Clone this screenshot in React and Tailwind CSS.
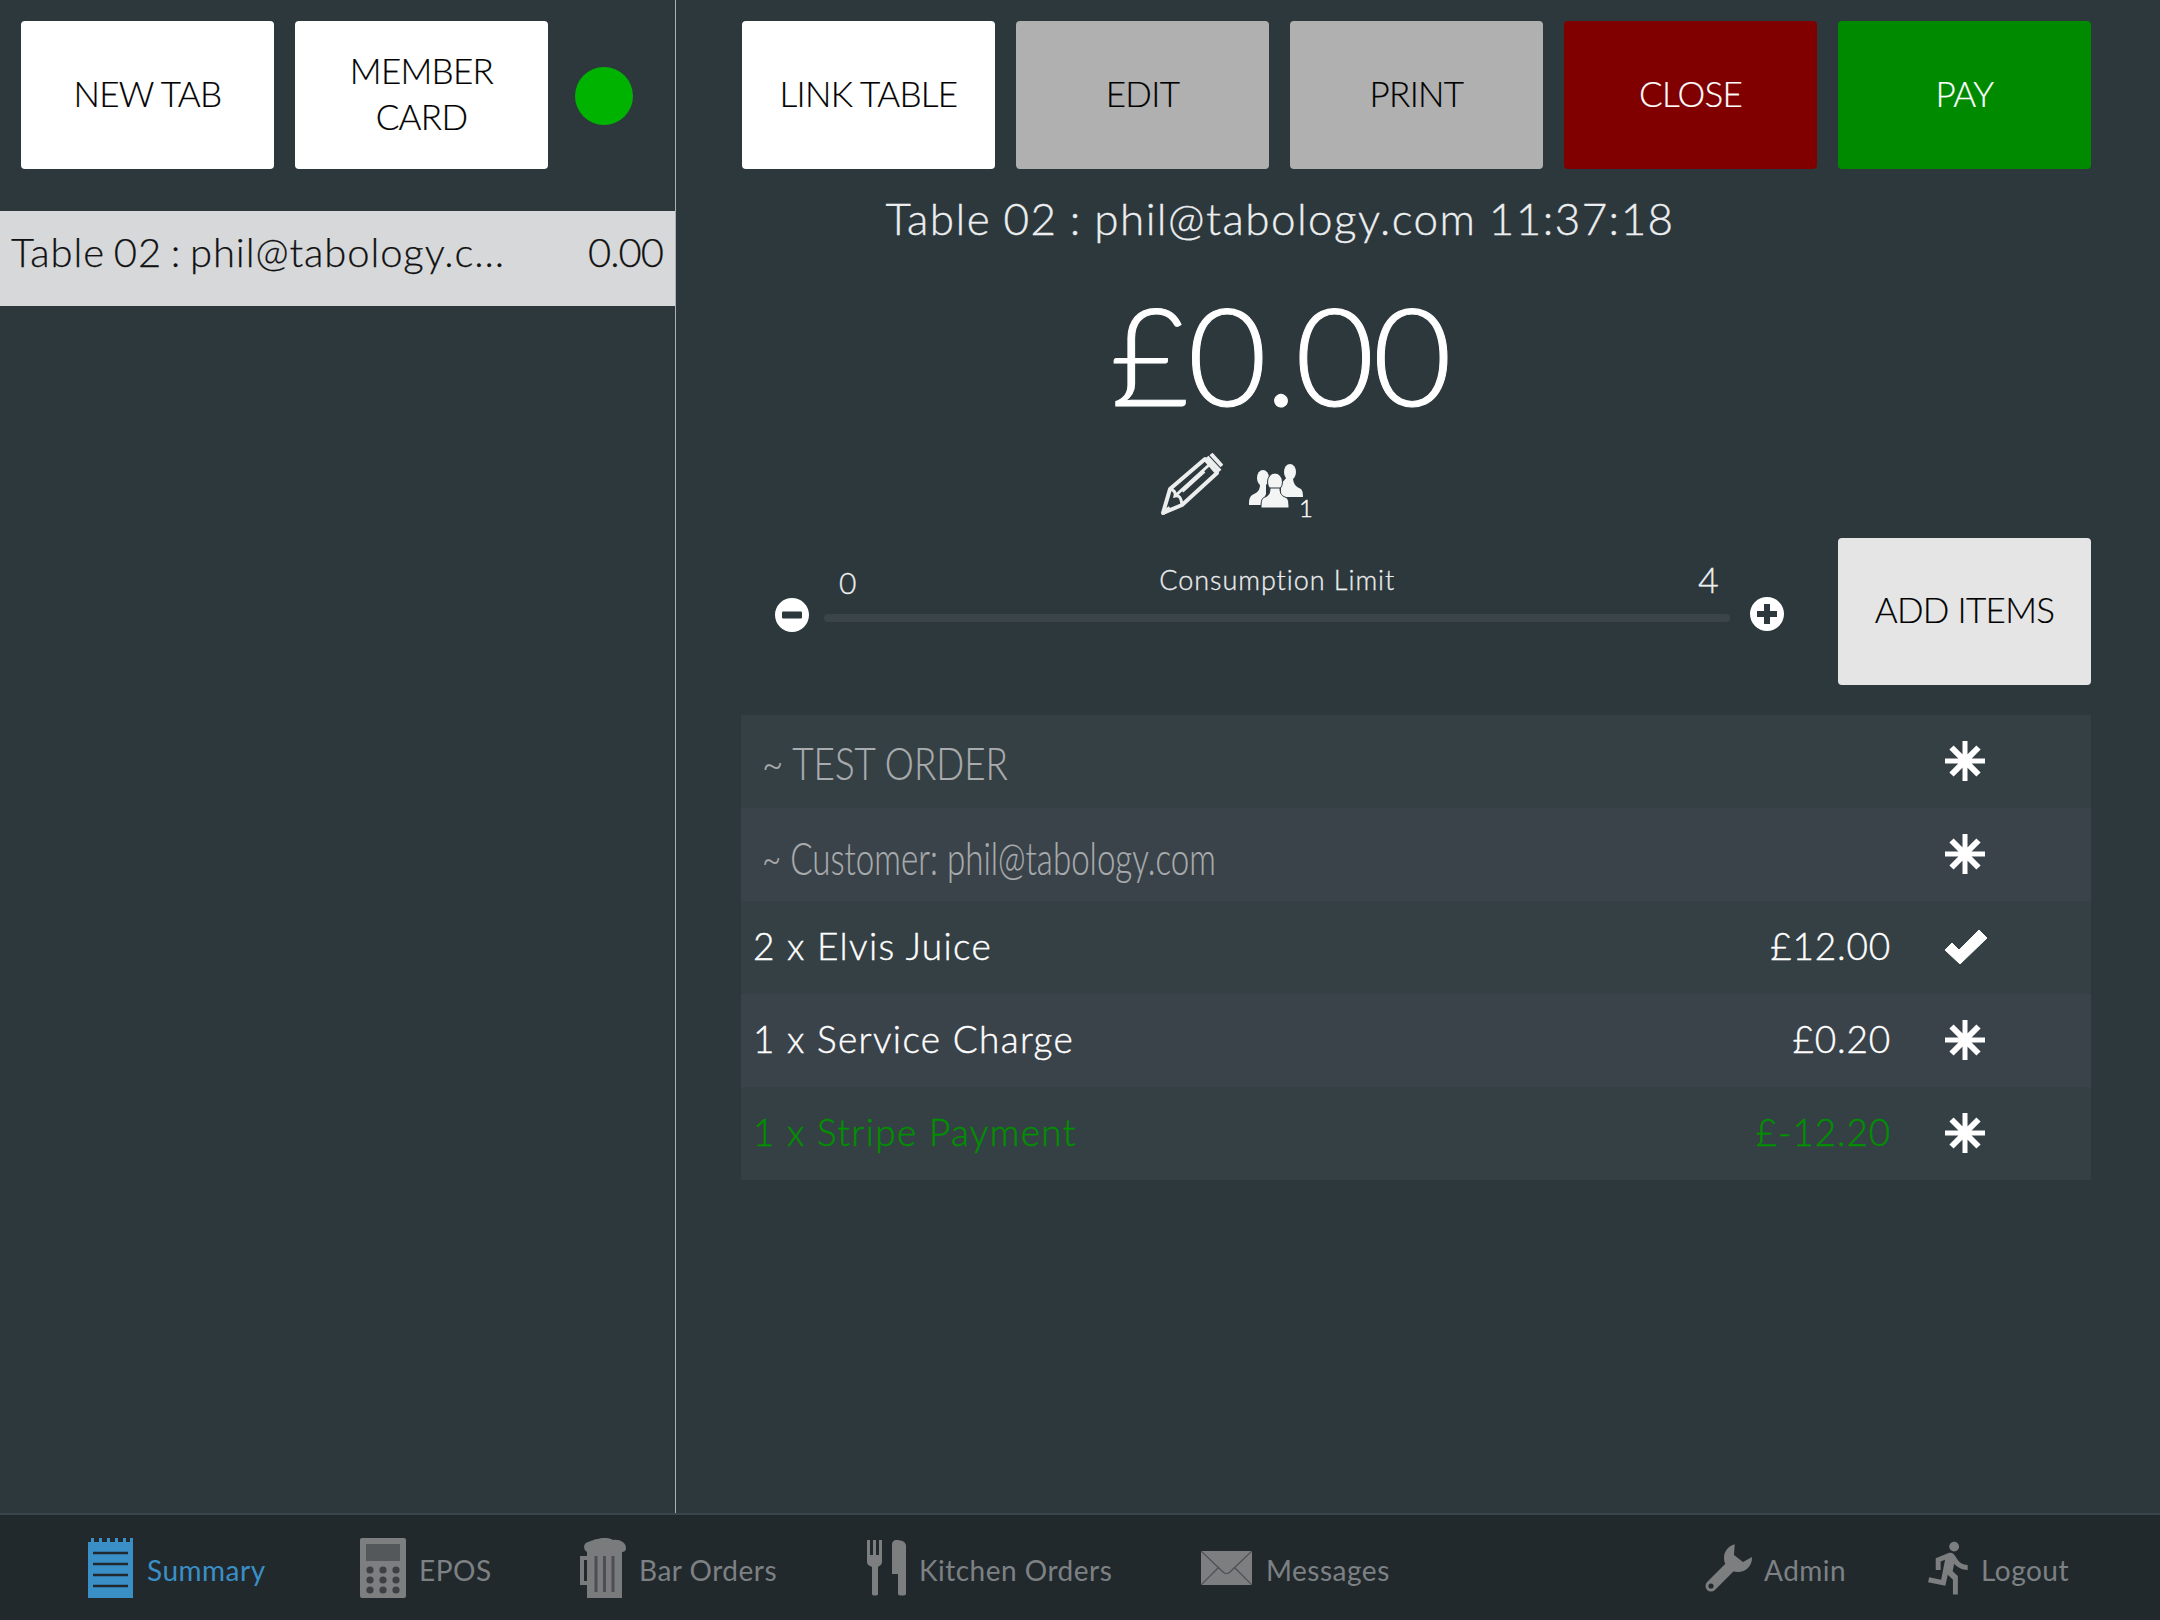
import React from "react";

function Btn({ className, children }) {
  return (
    <div className={`w-[253px] h-[148px] shrink-0 rounded-[4px] flex items-center justify-center text-center text-[35px] leading-[46px] tracking-[-0.7px] pb-[4px] [-webkit-text-stroke:0.2px] ${className}`}>
      {children}
    </div>
  );
}

function Asterisk() {
  return (
    <svg viewBox="0 0 40 40" className="w-[40px] h-[40px]" stroke="#fff" fill="none">
      <path d="M20 0V40M0 20H40" strokeWidth="5" />
      <path d="M6.5 6.5L33.5 33.5M33.5 6.5L6.5 33.5" strokeWidth="6" />
      <circle cx="20" cy="20" r="7" fill="#fff" stroke="none" />
    </svg>
  );
}

function Check() {
  return (
    <svg viewBox="0 0 42 34" className="w-[42px] h-[34px]">
      <path d="M0 20L7 13L14 20L34 0L42 8L15 34Z" fill="#fff" stroke="#fff" strokeWidth="1" strokeLinejoin="round" />
    </svg>
  );
}

function Row({ text, price, note, green, alt, check, noteClass }) {
  const color = green ? "text-[#009000]" : note ? "text-[#a9acae]" : "text-white";
  return (
    <div className={`h-[93px] flex items-center ${alt ? "bg-[#3b434a]" : "bg-[#354045]"}`}>
      <div className={`flex-1 ${color} ${note ? "pl-[21px]" : "pl-[12px] pb-[3px] text-[37px] tracking-[1.3px] [-webkit-text-stroke:0.4px]"}`}>
        {note ? (
          <span className={`inline-block origin-left whitespace-nowrap text-[46px] leading-[56px] font-light [-webkit-text-stroke:0.2px] ${noteClass}`}>{text}</span>
        ) : (
          text
        )}
      </div>
      <div className={`text-[37px] tracking-[0.8px] [-webkit-text-stroke:0.4px] text-right w-[240px] pb-[3px] ${color}`}>{price}</div>
      <div className="w-[200px] pl-[54px] pb-[2px] flex">
        {check ? <Check /> : <Asterisk />}
      </div>
    </div>
  );
}

function NavItem({ icon, label, className, active }) {
  return (
    <div className={`flex items-center shrink-0 ${className}`}>
      {icon}
      <span className={`pt-[5px] text-[28px] tracking-[0.5px] font-normal ${active ? "text-[#3a8fc7]" : "text-[#7d8184]"}`}>{label}</span>
    </div>
  );
}

export default function App() {
  return (
    <div className="w-[2160px] h-[1620px] flex flex-col bg-[#2d383d] overflow-hidden font-['Lato',sans-serif] font-light text-black">
      <div className="h-[1513px] flex">
        {/* left column */}
        <div className="w-[676px] shrink-0 border-r-[1px] border-[#aab0b3] pt-[21px]">
          <div className="flex items-center pl-[21px] gap-[21px]">
            <Btn className="bg-white">NEW TAB</Btn>
            <Btn className="bg-white">MEMBER<br />CARD</Btn>
            <div className="ml-[6px] mt-[2px] w-[58px] h-[58px] rounded-full bg-[#00b300]" />
          </div>
          <div className="mt-[42px] h-[95px] bg-[#d6d8da] flex justify-between pl-[11px] pr-[12px] pt-[16px] text-[40px] leading-[50px] text-[#111] [-webkit-text-stroke:0.25px]">
            <span className="tracking-[0.9px] [word-spacing:-3px]">Table 02 : phil@tabology.c...</span>
            <span className="tracking-[-1px]">0.00</span>
          </div>
        </div>

        {/* right column */}
        <div className="flex-1 pl-[66px] pr-[68px] pt-[21px] flex flex-col">
          <div className="flex gap-[21px]">
            <Btn className="bg-white">LINK TABLE</Btn>
            <Btn className="bg-[#b0b0b0]">EDIT</Btn>
            <Btn className="bg-[#b0b0b0]">PRINT</Btn>
            <Btn className="bg-[#800000] text-white">CLOSE</Btn>
            <Btn className="bg-[#008a00] text-white">PAY</Btn>
          </div>

          <div className="w-[1076px] flex flex-col items-center">
            <div className="mt-[19px] h-[60px] leading-[60px] text-[44px] tracking-[1.45px] [word-spacing:-1px] text-[#eceeef] [-webkit-text-stroke:0.35px]">
              Table 02 : phil@tabology.com 11:37:18
            </div>
            <div className="h-[170px] mt-[22px] leading-[166px] text-[137px] tracking-[-2px] text-white [-webkit-text-stroke:1px]">£0.00</div>
            <div className="mt-[13px] h-[62px] flex items-start gap-[26px] pr-[95px]">
              <svg viewBox="0 0 62 62" className="w-[62px] h-[62px]" fill="none" stroke="#eceeee">
                <path d="M2 60L9 36L44 6L56 20L21 52Z" strokeWidth="4" strokeLinejoin="round" />
                <path d="M9 36C13 37 15 39 14 43C18 42 20 44 21 52M14 43L48 12" strokeWidth="3" />
                <path d="M21 38L43 18" strokeWidth="4" />
                <path d="M2 60L9 55" strokeWidth="4" />
                <path d="M46 4L59 18M50 1L61 13" strokeWidth="4" />
              </svg>
              <div className="relative w-[55px] h-[62px]">
                <svg viewBox="0 0 55 44" className="absolute left-0 top-[10px] w-[55px] h-[46px]" fill="#f3f4f4">
                  <ellipse cx="41" cy="8" rx="6" ry="8" />
                  <path d="M38 13H44C44 19 46 22 50 24C53 25 54 27 54 33H32V20Z" />
                  <ellipse cx="14" cy="14" rx="6" ry="8" />
                  <path d="M11 20H17L17 30L12 41H0C0 34 1 32 5 30C9 28 11 26 11 20Z" />
                  <ellipse cx="26" cy="18" rx="7.5" ry="9" stroke="#2d383d" strokeWidth="1" />
                  <path d="M21 24H31C31 30 33 32 36 33C39 34 40 36 40 44H12C12 36 13 34 16 33C19 32 21 30 21 24Z" stroke="#2d383d" strokeWidth="1" />
                </svg>
                <span className="absolute left-[50px] top-[43px] text-[24px] leading-[24px] text-white [-webkit-text-stroke:0.4px]">1</span>
              </div>
            </div>
          </div>

          <div className="mt-[23px] flex">
            <div className="w-[1096px] shrink-0 h-[147px] pl-[33px] flex">
              <svg viewBox="0 0 34 34" className="w-[34px] h-[34px] mt-[60px]">
                <circle cx="17" cy="17" r="17" fill="#fff" />
                <rect x="7" y="13.5" width="20" height="7" rx="1" fill="#2d383d" />
              </svg>
              <div className="ml-[15px] w-[906px] flex flex-col">
                <div className="h-[76px] flex justify-between items-end pl-[15px] pr-[11px] pb-[14px] text-[#eceeef]">
                  <span className="text-[30px] leading-[34px] pb-[1px] [-webkit-text-stroke:0.3px]">0</span>
                  <span className="text-[27px] leading-[34px] tracking-[0.95px] pb-[3px] [-webkit-text-stroke:0.3px]">Consumption Limit</span>
                  <span className="text-[36px] leading-[38px] pb-[2px] [-webkit-text-stroke:0.3px]">4</span>
                </div>
                <div className="h-[8px] rounded-full bg-[#3a4449]" />
              </div>
              <svg viewBox="0 0 34 34" className="ml-[20px] w-[34px] h-[34px] mt-[59px]">
                <circle cx="17" cy="17" r="17" fill="#fff" />
                <path d="M14 7H20V14H27V20H20V27H14V20H7V14H14Z" fill="#2d383d" />
              </svg>
            </div>
            <div className="w-[253px] h-[147px] rounded-[4px] bg-[#e5e5e5] flex items-center justify-center text-[35px] tracking-[-0.7px] pb-[4px] [-webkit-text-stroke:0.2px]">ADD ITEMS</div>
          </div>

          <div className="mt-[30px] -ml-[1px] mr-[1px] flex flex-col">
            <Row note noteClass="scale-x-[0.8] pt-[2px]" text="~ TEST ORDER" />
            <Row note alt noteClass="scale-x-[0.72] pt-[6px]" text="~ Customer: phil@tabology.com" />
            <Row text="2 x Elvis Juice" price="£12.00" check />
            <Row alt text="1 x Service Charge" price="£0.20" />
            <Row green text="1 x Stripe Payment" price="£-12.20" />
          </div>
        </div>
      </div>

      {/* bottom tab bar */}
      <div className="h-[107px] border-t-[2px] border-[#38464b] bg-[#22292d] flex items-center pl-[88px]">
        <NavItem
          active
          className="w-[272px]"
          label="Summary"
          icon={
            <svg viewBox="0 0 45 60" className="w-[45px] h-[60px] mr-[14px]">
              <path d="M0 4H3V0H6V4H11V0H14V4H19V0H22V4H27V0H30V4H35V0H38V4H42V0H45V60H0Z" fill="#3a8fc7" />
              <path d="M5 15H40M5 26H40M5 37H40M5 48H40" stroke="#22292d" strokeWidth="2.5" />
            </svg>
          }
        />
        <NavItem
          className="w-[220px]"
          label="EPOS"
          icon={
            <svg viewBox="0 0 46 60" className="w-[46px] h-[60px] mr-[13px]">
              <rect width="46" height="60" rx="2" fill="#7d7e80" />
              <rect x="6" y="6" width="34" height="17" fill="#55585a" />
              {[32, 42, 52].map((y) =>
                [10, 23, 36].map((x) => <circle key={`${x}-${y}`} cx={x} cy={y} r="3.6" fill="#3c4043" />)
              )}
            </svg>
          }
        />
        <NavItem
          className="w-[287px]"
          label="Bar Orders"
          icon={
            <svg viewBox="0 0 46 60" className="w-[46px] h-[60px] mr-[13px]">
              <path d="M7 60V14C3 12 3 5 8 4C12 3 14 1 18 1C24-1 30 0 33 2C39 1 46 4 46 10C46 13 44 14 42 14V60Z" fill="#7a7b7d" />
              <path d="M8 20H2V45H8" fill="none" stroke="#7a7b7d" strokeWidth="4" />
              <path d="M16 18V54M24.5 18V54M33 18V54" stroke="#4b4f51" strokeWidth="3" />
            </svg>
          }
        />
        <NavItem
          className="w-[334px]"
          label="Kitchen Orders"
          icon={
            <svg viewBox="0 0 39 56" className="w-[39px] h-[56px] mr-[13px]">
              <path d="M0 0H3V15H6V0H9V15H12V0H15V22C15 25 12 26 11 27V54C11 56 5 56 5 54V27C3 26 0 25 0 22Z" fill="#7d7e80" />
              <path d="M29 0C35 0 39 2 39 6V54C39 56 31 56 31 54V34H25V4C25 2 27 0 29 0Z" fill="#7d7e80" />
            </svg>
          }
        />
        <NavItem
          className="w-[504px]"
          label="Messages"
          icon={
            <svg viewBox="0 0 51 34" className="w-[51px] h-[34px] mr-[14px]">
              <rect width="51" height="34" fill="#7d7e80" />
              <path d="M0 0L22 21C24 23 27 23 29 21L51 0M0 34L18 16M51 34L33 16" stroke="#4b4f51" strokeWidth="1.2" fill="none" />
            </svg>
          }
        />
        <NavItem
          className="w-[225px]"
          label="Admin"
          icon={
            <svg viewBox="0 0 47 49" className="w-[47px] h-[49px] mr-[12px]">
              <path d="M6 43L30 19" stroke="#7d7e80" strokeWidth="11" strokeLinecap="round" />
              <circle cx="33" cy="15" r="14" fill="#7d7e80" />
              <path d="M30 -3L47 -3L49 13L38 19L29 12Z" fill="#22292d" />
              <circle cx="6" cy="43" r="2.6" fill="#22292d" />
            </svg>
          }
        />
        <NavItem
          className=""
          label="Logout"
          icon={
            <svg viewBox="0 0 24 24" className="w-[59px] h-[59px] -ml-[9px] mr-[1px]" fill="#7d7e80">
              <path d="M13.49 5.48c1.1 0 2-.9 2-2s-.9-2-2-2-2 .9-2 2 .9 2 2 2zm-3.6 13.9l1-4.4 2.1 2v6h2v-7.5l-2.1-2 .6-3c1.3 1.5 3.3 2.5 5.5 2.5v-2c-1.9 0-3.5-1-4.3-2.4l-1-1.6c-.4-.6-1-1-1.7-1-.3 0-.5.1-.8.1l-5.2 2.2v4.7h2v-3.4l1.8-.7-1.6 8.1-4.9-1-.4 2 7 1.4z" />
            </svg>
          }
        />
      </div>
    </div>
  );
}
